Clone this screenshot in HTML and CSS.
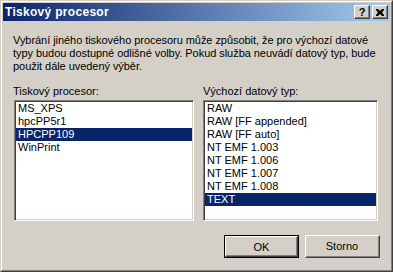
FILE: index.html
```html
<!DOCTYPE html>
<html>
<head>
<meta charset="utf-8">
<link rel="stylesheet" href="styles.css">
</head>
<body>
<div class="win">
  <div class="win-inner">
    <div class="titlebar">
      <span class="title">Tiskový procesor</span>
      <div class="tbtns">
        <div class="tbtn"><span class="q">?</span></div>
        <div class="tbtn">
          <svg width="8" height="7" viewBox="0 0 8 7"><path d="M0 0h2l2 2 2-2h2v1l-2 2.5 2 2.5v1h-2l-2-2-2 2h-2v-1l2-2.5-2-2.5z" fill="#000"/></svg>
        </div>
      </div>
    </div>
    <div class="content">
      <p class="desc">Vybrání jiného tiskového procesoru může způsobit, že pro výchozí datové<br>typy budou dostupné odlišné volby. Pokud služba neuvádí datový typ, bude<br>použit dále uvedený výběr.</p>
      <div class="cols">
        <div class="col col-left">
          <div class="label">Tiskový procesor:</div>
          <div class="list list-left">
            <div class="item">MS_XPS</div>
            <div class="item">hpcPP5r1</div>
            <div class="item sel">HPCPP109</div>
            <div class="item">WinPrint</div>
          </div>
        </div>
        <div class="col col-right">
          <div class="label">Výchozí datový typ:</div>
          <div class="list list-right">
            <div class="item">RAW</div>
            <div class="item">RAW [FF appended]</div>
            <div class="item">RAW [FF auto]</div>
            <div class="item">NT EMF 1.003</div>
            <div class="item">NT EMF 1.006</div>
            <div class="item">NT EMF 1.007</div>
            <div class="item">NT EMF 1.008</div>
            <div class="item sel">TEXT</div>
          </div>
        </div>
      </div>
      <div class="buttons">
        <div class="btn default"><div class="btn-in">OK</div></div>
        <div class="btn"><div class="btn-in">Storno</div></div>
      </div>
    </div>
  </div>
</div>
</body>
</html>
```
FILE: styles.css
```css
html, body {
  margin: 0;
  padding: 0;
  background: #d4d0c8;
}
body {
  font-family: "Liberation Sans", Arial, sans-serif;
  font-size: 11px;
  color: #000;
}
.win {
  width: 393px;
  height: 272px;
  box-sizing: border-box;
  border-top: 1px solid #d4d0c8;
  border-left: 1px solid #d4d0c8;
  border-right: 1px solid #404040;
  border-bottom: 1px solid #404040;
  background: #d4d0c8;
}
.win-inner {
  height: 100%;
  box-sizing: border-box;
  border-top: 1px solid #fff;
  border-left: 1px solid #fff;
  border-right: 1px solid #808080;
  border-bottom: 1px solid #808080;
  padding: 1px;
}
.titlebar {
  height: 18px;
  background: linear-gradient(to right, #0a246a, #a6caf0);
  display: flex;
  align-items: center;
  justify-content: space-between;
}
.title {
  color: #fff;
  font-weight: bold;
  font-size: 12px;
  padding-left: 2px;
  letter-spacing: 0.3px;
}
.tbtns {
  display: flex;
  gap: 2px;
  margin-right: 2px;
}
.tbtn {
  width: 16px;
  height: 14px;
  box-sizing: border-box;
  background: #d4d0c8;
  border-top: 1px solid #fff;
  border-left: 1px solid #fff;
  border-right: 1px solid #404040;
  border-bottom: 1px solid #404040;
  box-shadow: inset -1px -1px 0 #808080;
  display: flex;
  align-items: center;
  justify-content: center;
}
.q {
  font-weight: bold;
  font-size: 11px;
  line-height: 11px;
}
.content {
  padding: 13px 10px 0 10px;
}
.desc {
  margin: 0;
  line-height: 13px;
  letter-spacing: -0.05px;
  white-space: nowrap;
}
.cols {
  display: flex;
  margin-top: 12px;
}
.col-left {
  width: 181px;
}
.col-right {
  width: 175px;
  margin-left: 9px;
}
.label {
  line-height: 13px;
  height: 13px;
  margin-bottom: 2px;
}
.col-left .list {
  margin-left: 1px;
}
.list {
  height: 121px;
  box-sizing: border-box;
  background: #fff;
  border-top: 1px solid #808080;
  border-left: 1px solid #808080;
  border-right: 1px solid #fff;
  border-bottom: 1px solid #fff;
  box-shadow: inset 1px 1px 0 #404040, inset -1px -1px 0 #d4d0c8;
  padding: 1px;
}
.item {
  height: 13px;
  line-height: 13px;
  padding-left: 2px;
  white-space: nowrap;
}
.item.sel {
  background: #0a246a;
  color: #fff;
}
.buttons {
  display: flex;
  justify-content: flex-end;
  gap: 6px;
  margin-top: 14px;
}
.btn {
  width: 75px;
  height: 23px;
  box-sizing: border-box;
  border-top: 1px solid #fff;
  border-left: 1px solid #fff;
  border-right: 1px solid #404040;
  border-bottom: 1px solid #404040;
  background: #d4d0c8;
}
.btn-in {
  height: 100%;
  box-sizing: border-box;
  border-right: 1px solid #808080;
  border-bottom: 1px solid #808080;
  display: flex;
  align-items: center;
  justify-content: center;
}
.btn.default {
  border: 1px solid #000;
}
.btn.default .btn-in {
  border-top: 1px solid #fff;
  border-left: 1px solid #fff;
  border-right: 1px solid #404040;
  border-bottom: 1px solid #404040;
  box-shadow: inset -1px -1px 0 #808080;
}
```
